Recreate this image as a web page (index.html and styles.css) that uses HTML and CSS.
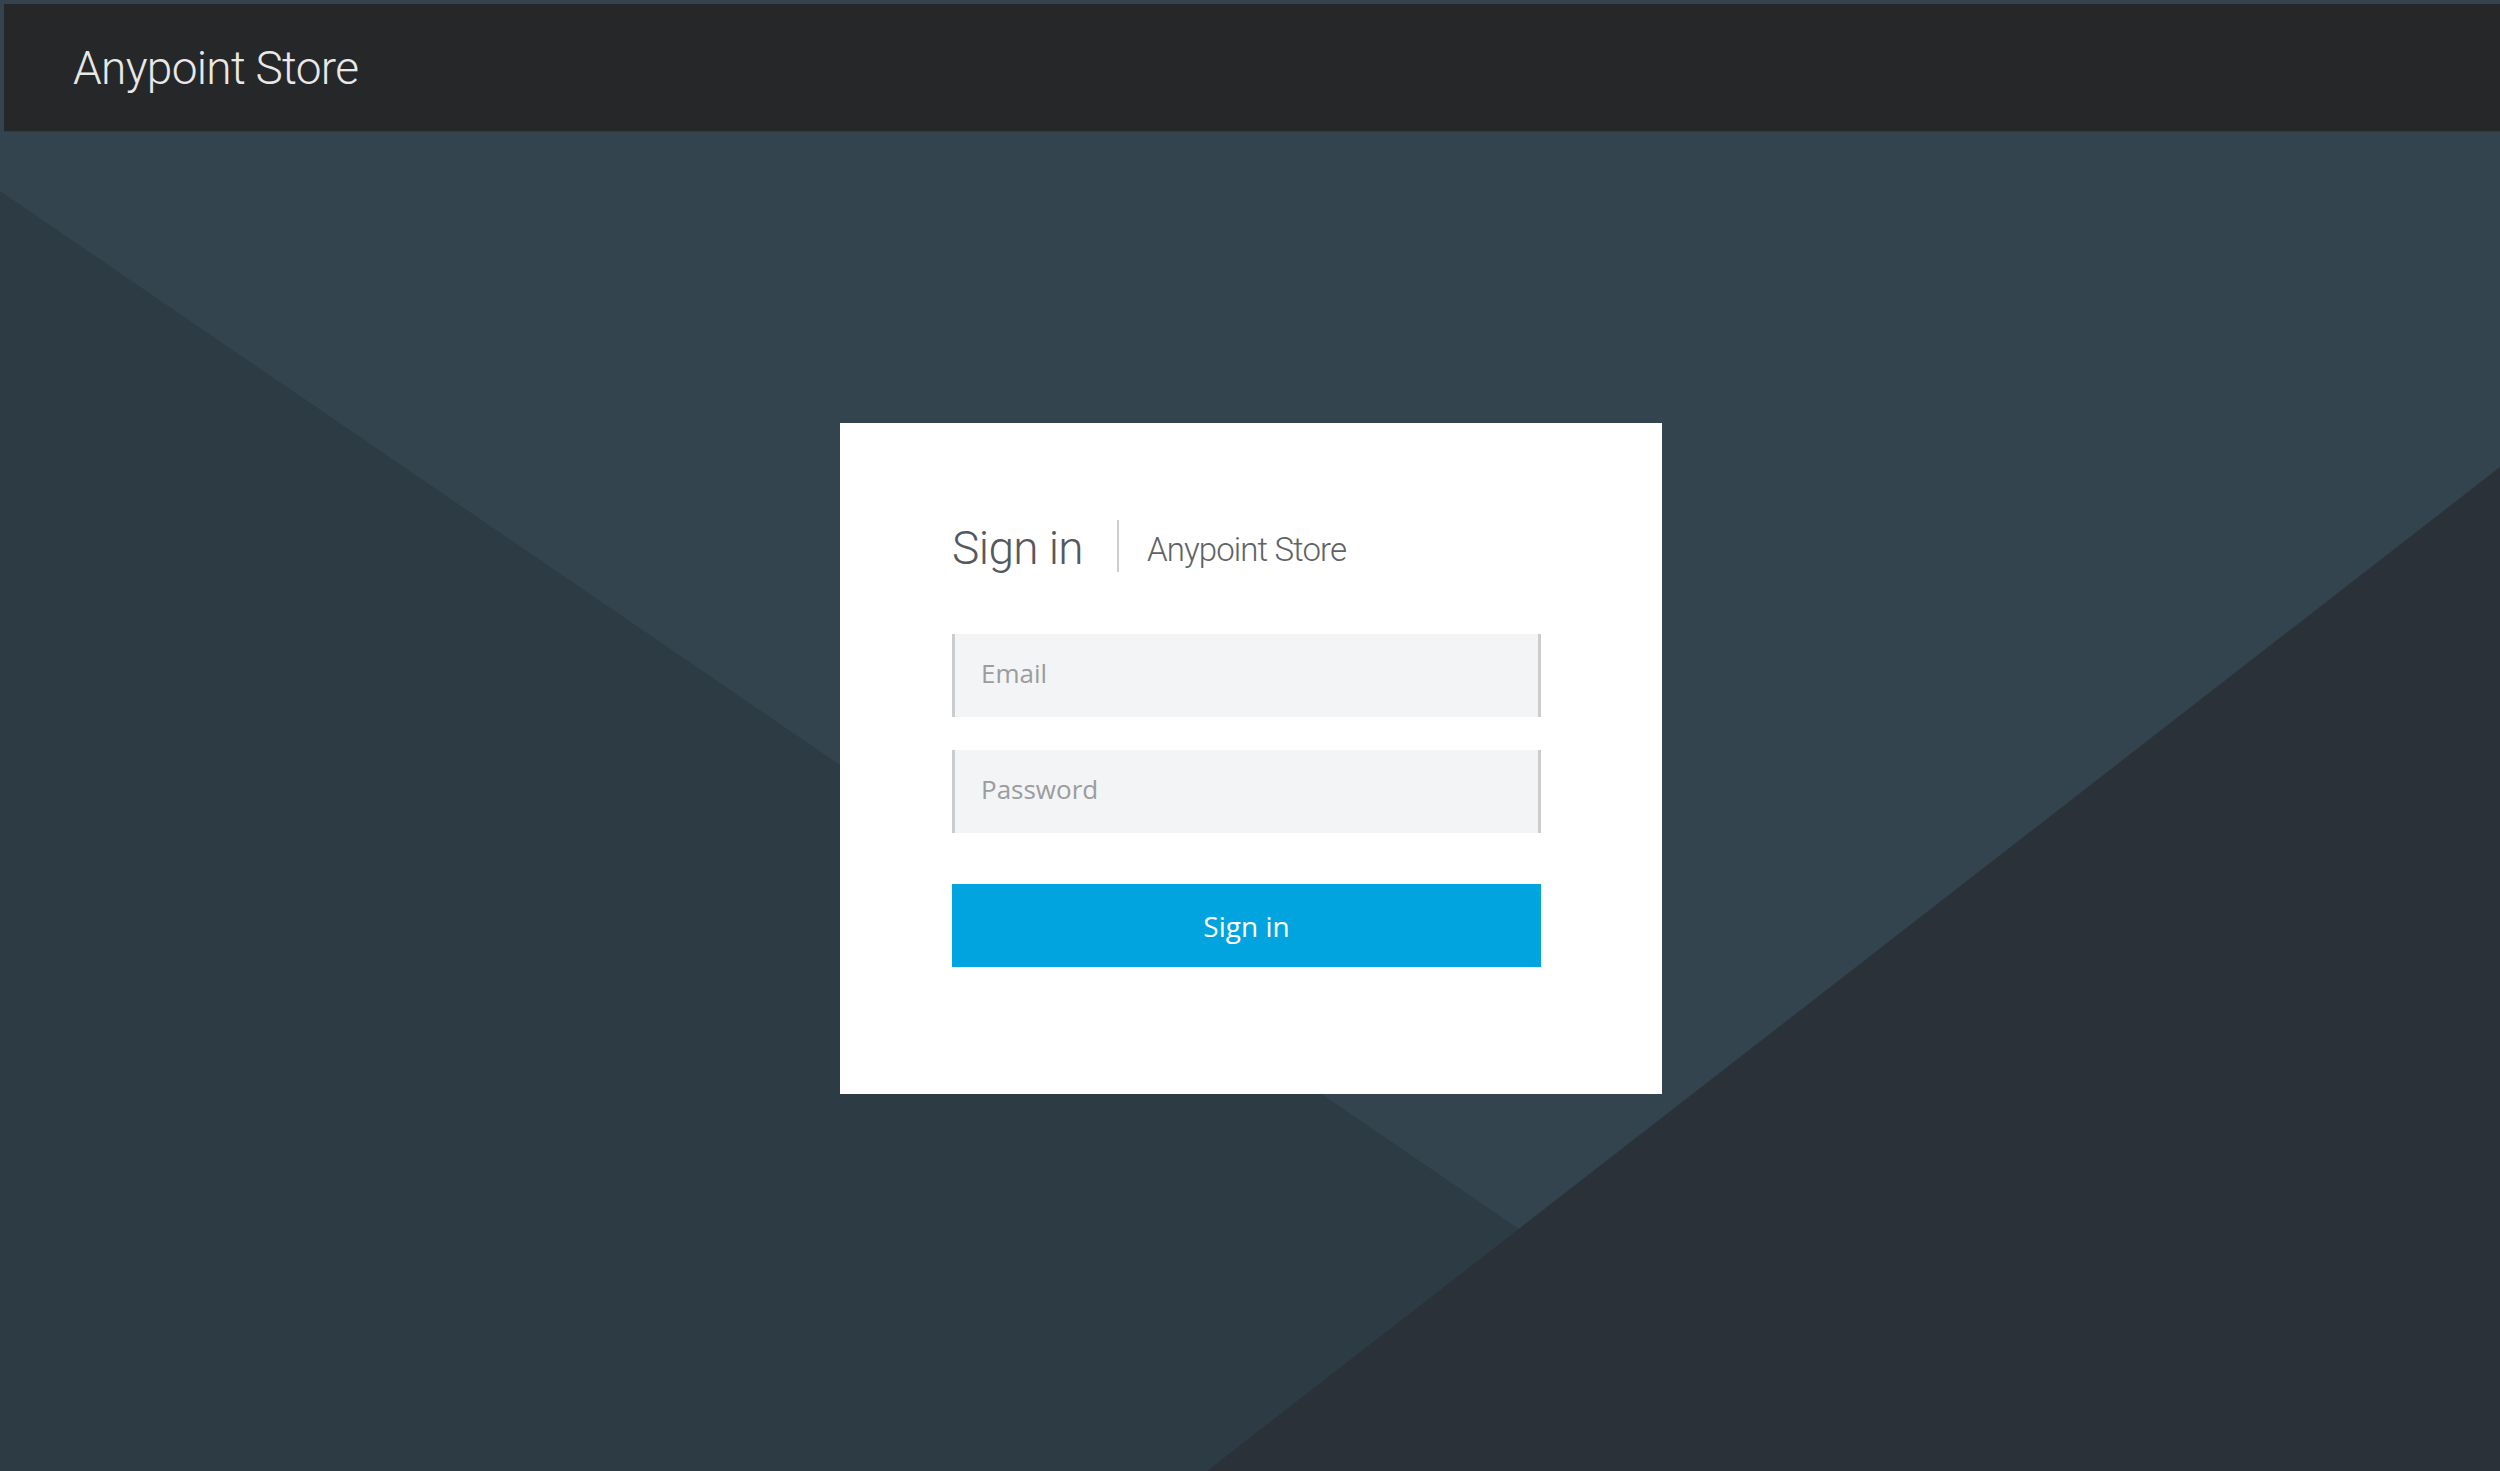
FILE: index.html
```html
<!DOCTYPE html>
<html>
<head>
  <meta charset="utf-8">
  <title>Anypoint Store - Sign in</title>
  <link rel="stylesheet" href="styles.css">
</head>
<body>
  <div class="topbar">
    <span class="brand">Anypoint Store</span>
  </div>
  <div class="main">
    <div class="card">
      <div class="card-title">
        <span class="title">Sign in</span>
        <span class="divider"></span>
        <span class="subtitle">Anypoint Store</span>
      </div>
      <form class="login-form" onsubmit="return false;">
        <input class="field" type="text" placeholder="Email">
        <input class="field" type="password" placeholder="Password">
        <button class="submit" type="submit">Sign in</button>
      </form>
    </div>
  </div>
</body>
</html>
```

FILE: styles.css
```css
html, body {
  margin: 0;
  padding: 0;
}

body {
  min-height: 100vh;
  font-family: "Open Sans", Arial, sans-serif;
  background-color: #33444f;
  background-image: url("data:image/svg+xml,%3Csvg xmlns='http://www.w3.org/2000/svg' viewBox='0 0 2500 1471' preserveAspectRatio='none'%3E%3Cpolygon points='0,191 2150,1660 0,1660' fill='%232d3c44'/%3E%3Cpolygon points='2500,467 2500,1471 1207,1471' fill='%232a3139'/%3E%3C/svg%3E");
  background-size: 100% 100%;
  background-repeat: no-repeat;
}

/* top bar */
.topbar {
  margin: 4px 0 0 4px;
  height: 128px;
  background-color: #262729;
  display: flex;
  align-items: center;
  padding-left: 69px;
  border-bottom: 1px solid #2f3b43;
  box-sizing: border-box;
}

.brand {
  font-family: Roboto, "Open Sans", sans-serif;
  font-weight: 300;
  font-size: 46px;
  letter-spacing: -0.7px;
  color: #e8e8e8;
}

/* sign in card */
.main {
  padding: 291px 0 0 2px;
  display: flex;
  justify-content: center;
}

.card {
  width: 822px;
  height: 671px;
  box-sizing: border-box;
  background-color: #fff;
  padding: 97px 121px 0 112px;
}

.card-title {
  display: flex;
  align-items: center;
  height: 52px;
  font-family: Roboto, "Open Sans", sans-serif;
  font-weight: 300;
}

.title {
  font-size: 46px;
  letter-spacing: -0.6px;
  color: #55595d;
  padding-top: 4px;
}

.divider {
  width: 2px;
  height: 52px;
  background-color: #cfcfcf;
  margin: 0 28px 0 34px;
}

.subtitle {
  font-size: 33px;
  letter-spacing: -0.9px;
  color: #5f6366;
  padding-top: 7px;
}

.login-form {
  margin-top: 62px;
  display: flex;
  flex-direction: column;
}

.field {
  height: 83px;
  box-sizing: border-box;
  background-color: #f3f4f5;
  border: none;
  border-left: 3px solid #cbcccd;
  border-right: 3px solid #cbcccd;
  border-radius: 0;
  padding: 0 26px 5px;
  font-family: "Open Sans", Arial, sans-serif;
  font-size: 26px;
  color: #333;
  outline: none;
  margin-bottom: 33px;
}

.field::placeholder {
  color: #9b9c9e;
}

.field + .field {
  margin-bottom: 51px;
}

.submit {
  height: 83px;
  border: none;
  border-radius: 0;
  background-color: #02a4e0;
  color: #fff;
  font-family: "Open Sans", Arial, sans-serif;
  font-size: 28px;
  cursor: pointer;
}
```
